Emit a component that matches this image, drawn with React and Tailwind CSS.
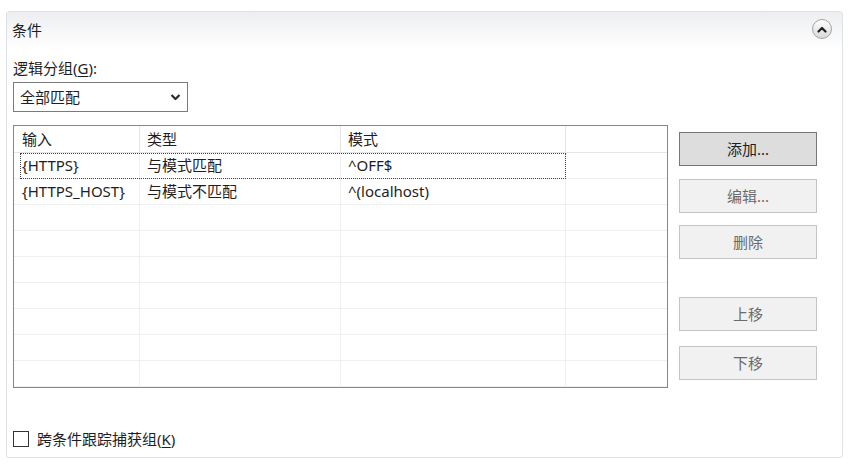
import React from 'react';

const FONT = { fontFamily: '"Noto Sans", "Noto Sans CJK SC", sans-serif' };

const ROWS = [
  { input: '{HTTPS}', type: '与模式匹配', pattern: '^OFF$', focus: true },
  { input: '{HTTPS_HOST}', type: '与模式不匹配', pattern: '^(localhost)' },
  {}, {}, {}, {}, {}, {}, {},
];

function CollapseButton() {
  return (
    <div className="w-[20px] h-[20px] rounded-full border border-[#a3a3a3] bg-gradient-to-b from-white to-[#d9d9d9] flex items-center justify-center">
      <svg width="10" height="7" viewBox="0 0 10 7">
        <path d="M1.5 5.5 L5 2 L8.5 5.5" fill="none" stroke="#1f1f1f" strokeWidth="2.2" strokeLinecap="round" strokeLinejoin="round" />
      </svg>
    </div>
  );
}

function Button({ label, primary, className }) {
  return (
    <div
      className={
        'w-[138px] h-[34px] flex items-center justify-center text-[15px] border ' +
        (primary ? 'bg-[#dddddd] border-[#777777] text-[#1e1e1e] ' : 'bg-[#f1f1f1] border-[#c4c4c4] text-[#6b6b6b] ') +
        (className || '')
      }
    >
      {label}
    </div>
  );
}

function Row({ row }) {
  return (
    <div className="relative flex h-[26px] border-b border-[#efefef] text-[15px] text-[#1e1e1e]">
      <div className="w-[126px] shrink-0 border-r border-[#efefef] pl-[8px] flex items-center">{row.input}</div>
      <div className="w-[201px] shrink-0 border-r border-[#efefef] pl-[7px] flex items-center">{row.type}</div>
      <div className="w-[225px] shrink-0 border-r border-[#efefef] pl-[7px] flex items-center">{row.pattern}</div>
      <div className="flex-1" />
      {row.focus && (
        <span className="absolute left-[6px] top-0 w-[546px] h-[26px] border border-dotted border-[#444]" />
      )}
    </div>
  );
}

export default function App() {
  return (
    <div className="w-[853px] h-[466px] bg-white pt-[11px] pl-[6px]" style={FONT}>
      <div className="w-[837px] h-[447px] rounded-[3px] border border-[#dde1e6] bg-white flex flex-col overflow-hidden">
        <div className="h-[38px] flex items-center justify-between pl-[5px] pr-[10px] bg-gradient-to-b from-[#eceef1] to-white">
          <span className="text-[15px] text-[#1e1e1e] -mt-[1px]">条件</span>
          <div className="-mt-[4px]"><CollapseButton /></div>
        </div>

        <div className="pl-[6px] flex flex-col">
          <div className="mt-[8px] h-[20px] leading-[20px] text-[15px] text-[#1e1e1e]">
            逻辑分组(<span className="underline underline-offset-2">G</span>):
          </div>

          <div className="mt-[4px] w-[175px] h-[30px] border border-[#7a7a7a] bg-white flex items-center justify-between pl-[6px] pr-[6px]">
            <span className="text-[15px] text-[#1e1e1e]">全部匹配</span>
            <svg width="11" height="8" viewBox="0 0 11 8">
              <path d="M1.5 2 L5.5 6 L9.5 2" fill="none" stroke="#2a2a2a" strokeWidth="2.2" strokeLinejoin="round" />
            </svg>
          </div>

          <div className="mt-[13px] flex">
            <div className="w-[655px] h-[263px] border border-[#828790] bg-white flex flex-col">
              <div className="flex h-[27px] border-b border-[#e5e5e5] text-[15px] text-[#1e1e1e]">
                <div className="w-[126px] shrink-0 border-r border-[#e5e5e5] pl-[8px] flex items-center">输入</div>
                <div className="w-[201px] shrink-0 border-r border-[#e5e5e5] pl-[7px] flex items-center">类型</div>
                <div className="w-[225px] shrink-0 border-r border-[#e5e5e5] pl-[7px] flex items-center">模式</div>
                <div className="flex-1" />
              </div>
              {ROWS.map((row, i) => (
                <Row key={i} row={row} />
              ))}
            </div>

            <div className="ml-[11px] flex flex-col">
              <Button label="添加..." primary className="mt-[7px]" />
              <Button label="编辑..." className="mt-[13px]" />
              <Button label="删除" className="mt-[12px]" />
              <Button label="上移" className="mt-[38px]" />
              <Button label="下移" className="mt-[15px]" />
            </div>
          </div>

          <div className="mt-[40px] flex items-center">
            <div className="w-[16px] h-[16px] border border-[#333333] bg-white" />
            <span className="ml-[8px] text-[15px] text-[#1e1e1e]">
              跨条件跟踪捕获组(<span className="underline underline-offset-2">K</span>)
            </span>
          </div>
        </div>
      </div>
    </div>
  );
}
